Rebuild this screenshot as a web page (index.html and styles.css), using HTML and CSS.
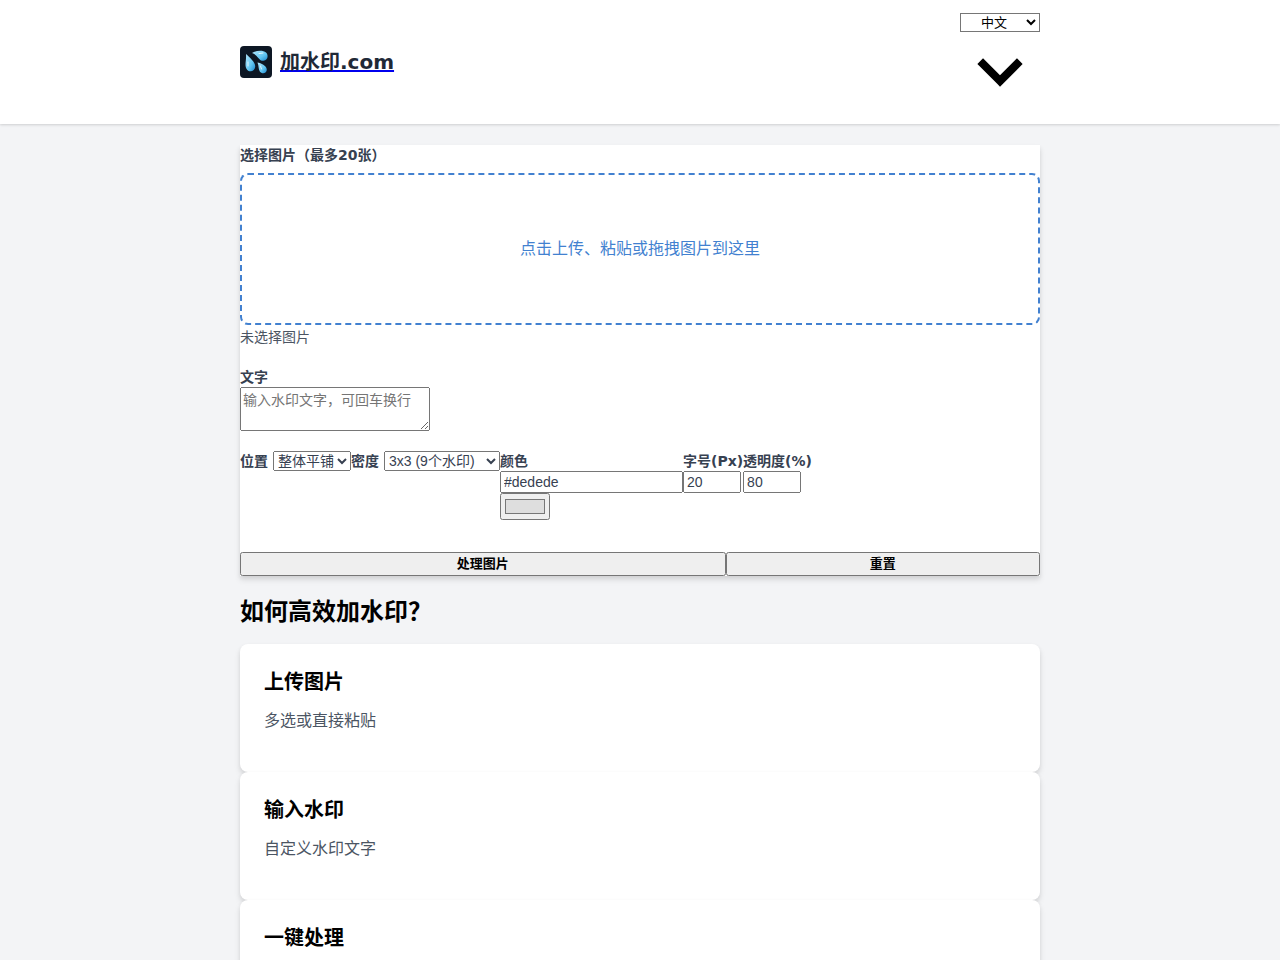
FILE: index.html
```html
<!DOCTYPE html>
<html lang="zh-CN">

<head>
    <meta charset="UTF-8">
    <meta name="viewport" content="width=device-width, initial-scale=1.0">
    <title>加水印.com</title>
    <link rel="stylesheet" href="styles.css">
</head>

<body>
    <header class="site-header">
        <div class="container header-inner">
            <a href="/" class="brand">
                <svg class="brand-logo" viewBox="0 0 32 32" aria-hidden="true">
                    <defs>
                        <linearGradient id="drop" x1="0" y1="0" x2="1" y2="1">
                            <stop offset="0" stop-color="#b4e6fb"/>
                            <stop offset="0.6" stop-color="#62c6f2"/>
                            <stop offset="1" stop-color="#1b86cc"/>
                        </linearGradient>
                    </defs>
                    <rect width="32" height="32" rx="4" fill="#0d1724"/>
                    <path fill="url(#drop)" d="M12 7C16 4.500 23 4 26 6.500C29 9.500 27.500 14.500 23.500 14.800C18.500 15 18 9 12 7Z"/>
                    <path fill="url(#drop)" d="M6 8C9.500 11.500 15.500 16 15.200 20.500C15 26 8.500 27 6.300 22.500C4.500 18.500 6.500 14 6 8Z"/>
                    <path fill="url(#drop)" d="M17.500 16.500C21 17 26.500 19.500 26.800 23.500C27 27.500 22 28.500 19.800 25.500C18.300 23 19 20 17.500 16.500Z"/>
                    <path fill="none" stroke="#e4f8ff" stroke-linecap="round" d="M19 7.500L23 7M8 16L8 20M20.500 20L21.500 23"/>
                </svg>
                <span class="brand-name">加水印.com</span>
            </a>
            <div class="language">
                <select class="language-select" aria-label="语言">
                    <option>中文</option>
                    <option>English</option>
                </select>
                <svg class="language-arrow" viewBox="0 0 20 20" aria-hidden="true">
                    <path d="M9.293 12.950l.707.707L15.657 8l-1.414-1.414L10 10.828 5.757 6.586 4.343 8z"/>
                </svg>
            </div>
        </div>
    </header>

    <main class="container">
        <form class="watermark-form">
            <span class="label">选择图片（最多20张）</span>
            <button type="button" class="upload-area">点击上传、粘贴或拖拽图片到这里</button>
            <p class="file-status">未选择图片</p>

            <div class="text-field">
                <label class="label" for="watermarkText">文字</label>
                <textarea class="field" id="watermarkText" rows="2" placeholder="输入水印文字，可回车换行"></textarea>
            </div>

            <div class="options">
                <div class="option-inline">
                    <label class="label" for="position">位置</label>
                    <select class="field" id="position">
                        <option>整体平铺</option>
                    </select>
                </div>
                <div class="option-inline">
                    <label class="label" for="density">密度</label>
                    <select class="field density" id="density">
                        <option>3x3 (9个水印)</option>
                    </select>
                </div>
                <div class="option color-option">
                    <label class="label" for="color">颜色</label>
                    <input class="field" type="text" id="color" value="#dedede">
                    <input type="color" class="color-picker" value="#dedede" aria-label="选择颜色">
                </div>
                <div class="option">
                    <label class="label" for="fontSize">字号(Px)</label>
                    <input class="field number" type="number" id="fontSize" value="20">
                </div>
                <div class="option">
                    <label class="label" for="opacity">透明度(%)</label>
                    <input class="field number" type="number" id="opacity" value="80">
                </div>
            </div>

            <div class="button-group">
                <button type="submit">处理图片</button>
                <button type="reset">重置</button>
            </div>
        </form>

        <section>
            <h2>如何高效加水印？</h2>
            <div class="card">
                <h3>上传图片</h3>
                <p>多选或直接粘贴</p>
            </div>
            <div class="card">
                <h3>输入水印</h3>
                <p>自定义水印文字</p>
            </div>
            <div class="card">
                <h3>一键处理</h3>
                <p>批量添加并下载</p>
            </div>
        </section>
    </main>
</body>

</html>
```
FILE: styles.css
```css
* {
    box-sizing: border-box;
}

body {
    margin: 0;
    font-family: "DejaVu Sans", "Noto Sans CJK SC", sans-serif;
    font-size: 16px;
    line-height: 24px;
    background-color: #f3f4f6;
    color: #000;
}

.container {
    max-width: 800px;
    margin: 0 auto;
}

.site-header {
    background: #fff;
    box-shadow: 0 1px 3px rgba(0, 0, 0, 0.1), 0 1px 2px rgba(0, 0, 0, 0.06);
}

.header-inner {
    display: flex;
    justify-content: space-between;
    align-items: center;
    padding: 12px 0;
}

.brand {
    display: flex;
    align-items: center;
    gap: 8px;
    color: #0000ee;
}

.brand-logo {
    width: 32px;
    height: 32px;
}

.brand-name {
    font-size: 20px;
    font-weight: bold;
    line-height: 28px;
    color: #1f2937;
}

.language {
    display: flex;
    flex-direction: column;
    width: 80px;
    padding-top: 1px;
}

.language-select {
    width: 100%;
    height: 19px;
    background: #fff;
    border: 1px solid #767676;
    border-radius: 0;
    font-family: "Liberation Sans", "Noto Sans CJK SC", sans-serif;
    font-size: 13px;
    text-align: center;
}

.language-arrow {
    width: 80px;
    height: 80px;
}

.watermark-form {
    margin-top: 21px;
    background: #fff;
    box-shadow: 0 4px 6px rgba(0, 0, 0, 0.1), 0 2px 4px rgba(0, 0, 0, 0.06);
}

.label {
    display: block;
    font-size: 14px;
    font-weight: bold;
    line-height: 20px;
    color: #374151;
}

.upload-area {
    display: block;
    width: 100%;
    height: 152px;
    margin-top: 8px;
    background: #fff;
    border: 2px dashed #4281d0;
    border-radius: 8px;
    color: #4281d0;
    font: inherit;
    cursor: pointer;
}

.file-status {
    margin: 2px 0 20px;
    font-size: 14px;
    line-height: 20px;
    color: #4b5563;
}

.field {
    font-family: "Liberation Sans", "Noto Sans CJK SC", sans-serif;
    font-size: 14px;
    color: #374151;
}

.text-field textarea {
    display: block;
    width: 190px;
    height: 44px;
    font-family: "Liberation Sans", "Noto Sans CJK TC", sans-serif;
    line-height: 20px;
}

.options {
    display: flex;
    align-items: flex-start;
    margin-top: 20px;
}

.option-inline {
    display: flex;
    gap: 5px;
}

.option-inline select {
    width: 78px;
    height: 20px;
}

.option-inline .density {
    width: 116px;
}

.option input {
    display: block;
    height: 22px;
}

.color-option {
    width: 183px;
}

.color-option .field {
    width: 100%;
}

.option .color-picker {
    width: 50px;
    height: 27px;
}

.option .number {
    width: 58px;
}

.button-group {
    display: grid;
    grid-template-columns: 17fr 11fr;
    margin-top: 32px;
}

.button-group button {
    height: 24px;
    padding: 0 6px 2px;
    font-family: "Liberation Sans", "Noto Sans CJK SC", sans-serif;
    font-size: 13px;
    font-weight: bold;
    line-height: 20px;
    cursor: pointer;
}

h2 {
    margin: 20px 0 16px;
    font-family: "DejaVu Sans", "Noto Sans CJK TC", sans-serif;
    font-size: 24px;
    line-height: 32px;
    text-spacing-trim: space-all;
}

.card {
    height: 128px;
    padding: 24px;
    background: #fff;
    border-radius: 8px;
    box-shadow: 0 4px 6px rgba(0, 0, 0, 0.1), 0 2px 4px rgba(0, 0, 0, 0.06);
}

.card h3 {
    margin: 0 0 13px;
    font-size: 20px;
    line-height: 28px;
}

.card p {
    margin: 0;
    color: #4b5563;
}
```
